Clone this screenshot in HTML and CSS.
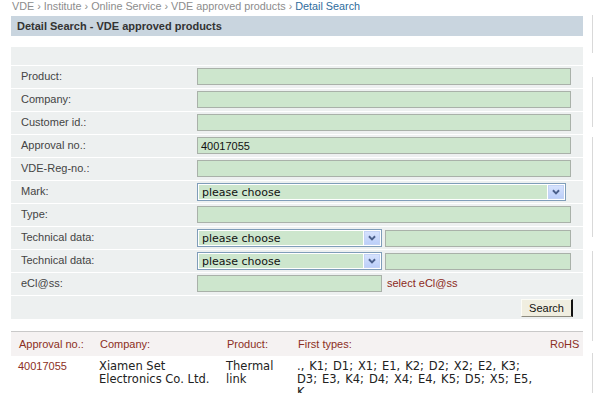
FILE: index.html
```html
<!DOCTYPE html>
<html lang="en">
<head>
<meta charset="UTF-8">
<title>Detail Search - VDE approved products</title>
<link rel="stylesheet" href="styles.css">
</head>
<body>

    <div class="page">
        <div class="crumbs">
            VDE › Institute › Online Service › VDE approved products › <span class="atual">Detail Search</span>
        </div>

        <h1 class="titulo">Detail Search - VDE approved products</h1>

        <form class="busca">
            <div class="linha">
                <label>Product:</label>
                <input type="text" class="campo">
            </div>
            <div class="linha">
                <label>Company:</label>
                <input type="text" class="campo">
            </div>
            <div class="linha">
                <label>Customer id.:</label>
                <input type="text" class="campo">
            </div>
            <div class="linha">
                <label>Approval no.:</label>
                <input type="text" class="campo" value="40017055">
            </div>
            <div class="linha">
                <label>VDE-Reg-no.:</label>
                <input type="text" class="campo">
            </div>
            <div class="linha">
                <label>Mark:</label>
                <div class="escolha larga">
                    <span class="escolha-texto">please choose</span>
                    <span class="seta"><svg width="16" height="14" viewBox="0 0 16 14"><path d="M4.5 5 L8 8.5 L11.5 5" fill="none" stroke="#4a5f8a" stroke-width="2.2"/></svg></span>
                </div>
            </div>
            <div class="linha">
                <label>Type:</label>
                <input type="text" class="campo">
            </div>
            <div class="linha">
                <label>Technical data:</label>
                <div class="escolha curta">
                    <span class="escolha-texto">please choose</span>
                    <span class="seta"><svg width="16" height="14" viewBox="0 0 16 14"><path d="M4.5 5 L8 8.5 L11.5 5" fill="none" stroke="#4a5f8a" stroke-width="2.2"/></svg></span>
                </div>
                <input type="text" class="campo resto">
            </div>
            <div class="linha">
                <label>Technical data:</label>
                <div class="escolha curta">
                    <span class="escolha-texto">please choose</span>
                    <span class="seta"><svg width="16" height="14" viewBox="0 0 16 14"><path d="M4.5 5 L8 8.5 L11.5 5" fill="none" stroke="#4a5f8a" stroke-width="2.2"/></svg></span>
                </div>
                <input type="text" class="campo resto">
            </div>
            <div class="linha">
                <label>eCl@ss:</label>
                <input type="text" class="campo meio">
                <a class="eclass">select eCl@ss</a>
            </div>
            <div class="linha-botao">
                <button type="button" class="botao">Search</button>
            </div>
        </form>

        <table class="resultado">
            <colgroup>
                <col style="width: 81px">
                <col style="width: 127px">
                <col style="width: 71px">
                <col style="width: 252px">
                <col style="width: 41px">
            </colgroup>
            <thead>
                <tr>
                    <th>Approval no.:</th>
                    <th>Company:</th>
                    <th>Product:</th>
                    <th>First types:</th>
                    <th class="direita">RoHS</th>
                </tr>
            </thead>
            <tbody>
                <tr>
                    <td class="numero">40017055</td>
                    <td>Xiamen Set Electronics Co. Ltd.</td>
                    <td>Thermal link</td>
                    <td class="primeiros">., K1; D1; X1; E1, K2; D2; X2; E2, K3; D3; E3, K4; D4; X4; E4, K5; D5; X5; E5, K</td>
                    <td></td>
                </tr>
            </tbody>
        </table>
    </div>

    <div class="lateral">
        <div class="risco r1"></div>
        <div class="risco r2"></div>
        <div class="risco r3"></div>
        <div class="risco r4"></div>
        <div class="risco r5"></div>
    </div>

</body>
</html>
```

FILE: styles.css
```css
*{
    margin: 0;
    padding: 0;
    box-sizing: border-box;
}

body{
    background-color: #fff;
    display: flex;
    font-family: "Liberation Sans", Arial, sans-serif;
    font-size: 11px;
    color: #333;
    overflow: hidden;
}

.page{
    width: 572px;
    margin-left: 11px;
}

.crumbs{
    font-size: 10.8px;
    line-height: 13px;
    color: #8c8c8c;
    padding-left: 1px;
    margin-bottom: 3px;
    white-space: nowrap;
}

.crumbs .atual{
    color: #2e6c9c;
}

.titulo{
    background-color: #c9d5df;
    height: 20px;
    line-height: 20px;
    padding-left: 6px;
    font-size: 11px;
    font-weight: bold;
    color: #333;
    margin-bottom: 11px;
}

.busca{
    background-color: #edf0f0;
    padding-top: 18px;
}

.linha{
    display: flex;
    align-items: flex-start;
    height: 23px;
    padding-top: 2px;
    padding-left: 10px;
    border-top: 1px solid #fff;
}

.linha label{
    width: 176px;
    padding-top: 2px;
    line-height: 13px;
    color: #444;
}

.campo{
    width: 374px;
    height: 17px;
    background-color: #cde6cd;
    border: 1px solid #a9b1a9;
    padding: 0 3px;
    font-family: "Liberation Sans", Arial, sans-serif;
    font-size: 11px;
    color: #111;
    outline: none;
}

.campo.resto{
    width: 186px;
    margin-left: 3px;
    margin-top: 1px;
}

.campo.meio{
    width: 185px;
}

.escolha{
    display: flex;
    height: 18px;
    border: 1px solid #7f9db9;
    padding: 1px;
    background-color: #fff;
}

.escolha.larga{
    width: 369px;
}

.escolha.curta{
    width: 185px;
}

.escolha-texto{
    flex: 1;
    background-color: #cde6cd;
    font-family: "DejaVu Sans", Verdana, sans-serif;
    font-size: 11px;
    line-height: 14px;
    padding: 1px 0 0 3px;
    overflow: hidden;
    color: #111;
}

.seta{
    width: 16px;
    height: 14px;
    margin-left: 1px;
    background: linear-gradient(180deg, #d6e2fd 0%, #bccff9 100%);
    border: 1px solid #c3d3f5;
    display: flex;
    align-items: center;
    justify-content: center;
}

.seta svg{
    display: block;
}

.eclass{
    color: #8c2a22;
    margin-left: 5px;
    line-height: 17px;
}

.linha-botao{
    display: flex;
    justify-content: flex-end;
    border-top: 1px solid #fff;
    padding: 3px 10px 2px 0;
    height: 24px;
}

.botao{
    width: 52px;
    height: 18px;
    background-color: #f0eee0;
    border-top: 1px solid #fcfcf6;
    border-left: 1px solid #fcfcf6;
    border-right: 2px solid #111;
    border-bottom: 1px solid #8e8c80;
    font-family: "Liberation Sans", Arial, sans-serif;
    font-size: 11px;
    color: #111;
    cursor: pointer;
}

.resultado{
    width: 572px;
    margin-top: 12px;
    border-collapse: collapse;
    table-layout: fixed;
    border-top: 1px solid #c9c9c9;
}

.resultado th{
    background-color: #f5f2f2;
    height: 24px;
    text-align: left;
    font-weight: normal;
    color: #8c2f23;
    padding: 0 4px 0 8px;
}

.resultado th.direita{
    text-align: right;
    padding-right: 12px;
}

.resultado td{
    vertical-align: top;
    padding: 4px 4px 0 7px;
    font-family: "DejaVu Sans", Verdana, sans-serif;
    font-size: 11.5px;
    line-height: 13.3px;
    color: #222;
}

.resultado td.primeiros{
    padding-right: 8px;
    word-spacing: 1.3px;
}

.resultado td.numero{
    font-family: "Liberation Sans", Arial, sans-serif;
    font-size: 11px;
    color: #8c2f23;
}

.lateral{
    margin-left: 9px;
    width: 3px;
    display: flex;
    flex-direction: column;
}

.risco{
    border-left: 1px solid #d9d9d9;
}

.r1{ margin-top: 15px; height: 38px; }
.r2{ margin-top: 24px; height: 50px; }
.r3{ margin-top: 10px; height: 100px; }
.r4{ margin-top: 14px; height: 90px; }
.r5{ margin-top: 12px; height: 60px; }
```
